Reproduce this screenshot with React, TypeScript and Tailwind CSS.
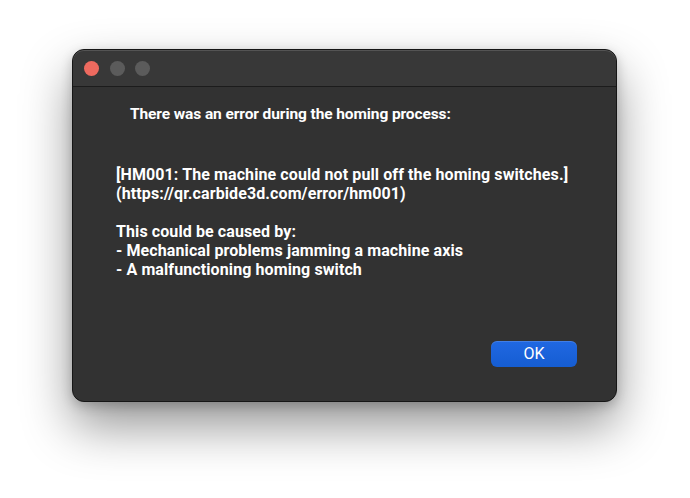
export default function App() {
  return (
    <div className="w-[690px] h-[498px] bg-white pl-[72px] pt-[49px] font-['Roboto','Liberation_Sans',sans-serif]">
      <div className="w-[545px] h-[353px] rounded-[12px] bg-[#323232] border border-[#161616] shadow-[0_24px_50px_rgba(0,0,0,0.42),0_4px_12px_rgba(0,0,0,0.2)] overflow-hidden flex flex-col">
        <div className="h-[37px] shrink-0 bg-[#383838] border-b border-[#1c1c1c] rounded-t-[11px] shadow-[inset_0_1px_0_rgba(255,255,255,0.14)] flex items-center gap-[10.5px] pl-[11px]">
          <span className="w-[15px] h-[15px] rounded-full bg-[#ee6a5f]" />
          <span className="w-[15px] h-[15px] rounded-full bg-[#5b5b5b]" />
          <span className="w-[15px] h-[15px] rounded-full bg-[#5b5b5b]" />
        </div>
        <div className="flex-1 flex flex-col pl-[43px] pr-[39px] pt-[18px] pb-[34px] text-white text-[16px] leading-[19px] font-bold whitespace-nowrap">
          <p className="pl-[14px] text-[15.5px] tracking-[-0.1px]">There was an error during the homing process:</p>
          <div className="mt-[41px] tracking-[0.1px]">
            <p>[HM001: The machine could not pull off the homing switches.]</p>
            <p>(https://qr.carbide3d.com/error/hm001)</p>
            <p className="mt-[19px]">This could be caused by:</p>
            <p>- Mechanical problems jamming a machine axis</p>
            <p>- A malfunctioning homing switch</p>
          </div>
          <div className="flex justify-end mt-auto">
            <button className="w-[86px] h-[26px] rounded-[6px] bg-gradient-to-b from-[#2068e2] to-[#155dd2] shadow-[inset_0_1px_0_rgba(255,255,255,0.15)] text-white text-[16px] font-normal leading-none">
              OK
            </button>
          </div>
        </div>
      </div>
    </div>
  );
}
